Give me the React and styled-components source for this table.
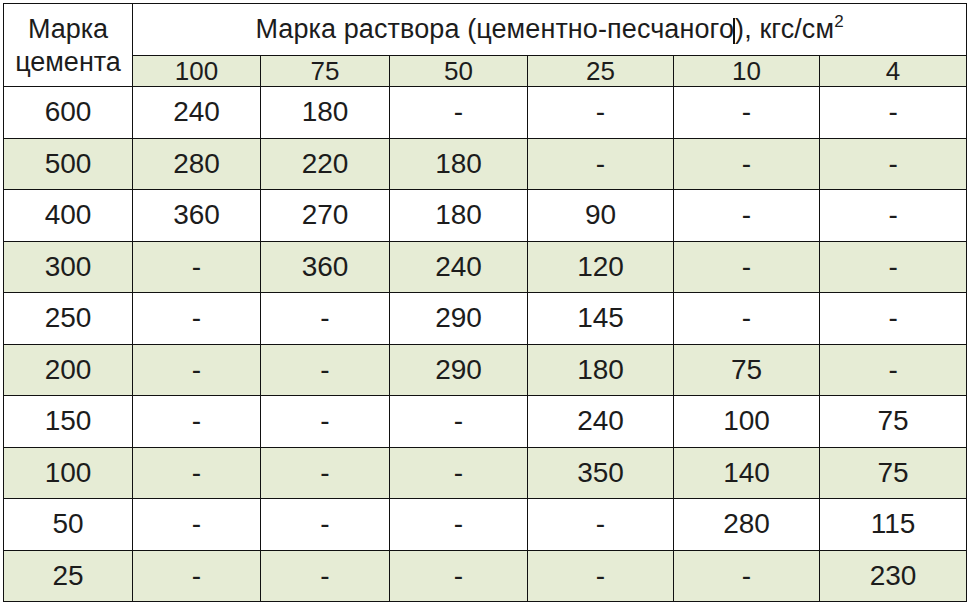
import React from 'react'
import styled, { createGlobalStyle } from 'styled-components'

const GlobalStyle = createGlobalStyle`
  html, body {
    margin: 0;
    padding: 0;
    background: #fff;
  }
  body {
    font-family: "Liberation Sans", Arial, sans-serif;
    color: #1c1c1c;
  }
`

const Page = styled.div`
  padding: 3px 0 0 3px;
`

const Table = styled.table`
  border-collapse: collapse;
  table-layout: fixed;
  width: 963px;
`

const Cell = styled.td`
  border: 1px solid #111;
  padding: 0;
  text-align: center;
  vertical-align: middle;
  font-size: 28px;
  font-weight: normal;
  line-height: 1;
  background: ${props => (props.shaded ? '#e6ecd5' : '#fff')};
`

const CornerCell = styled(Cell)`
  font-size: 27px;
  line-height: 33px;
  background: #fff;
  padding-top: 2px;
`

const TitleCell = styled(Cell)`
  font-size: 27px;
  letter-spacing: 0.1px;
  height: 51px;
  background: #fff;
  white-space: nowrap;
`

const SubCell = styled(Cell)`
  font-size: 26px;
  height: 30px;
  background: #e6ecd5;
`

const BodyRow = styled.tr`
  height: 51.5px;
`

const Cursor = styled.span`
  display: inline-block;
  width: 2px;
  height: 26px;
  margin: 0 0 0 -1px;
  background: #111;
  vertical-align: -6px;
`

const Sup = styled.sup`
  font-size: 17px;
  vertical-align: 11px;
  line-height: 0;
`

const widths = [129, 128, 129, 138, 146, 146, 147]
const marks = ['100', '75', '50', '25', '10', '4']

const rows = [
  ['600', '240', '180', '-', '-', '-', '-'],
  ['500', '280', '220', '180', '-', '-', '-'],
  ['400', '360', '270', '180', '90', '-', '-'],
  ['300', '-', '360', '240', '120', '-', '-'],
  ['250', '-', '-', '290', '145', '-', '-'],
  ['200', '-', '-', '290', '180', '75', '-'],
  ['150', '-', '-', '-', '240', '100', '75'],
  ['100', '-', '-', '-', '350', '140', '75'],
  ['50', '-', '-', '-', '-', '280', '115'],
  ['25', '-', '-', '-', '-', '-', '230'],
]

export default function App() {
  return (
    <Page>
      <GlobalStyle />
      <Table>
        <colgroup>
          {widths.map((w, i) => (
            <col key={i} style={{ width: w }} />
          ))}
        </colgroup>
        <thead>
          <tr>
            <CornerCell as="th" rowSpan={2}>
              Марка
              <br />
              цемента
            </CornerCell>
            <TitleCell as="th" colSpan={6}>
              Марка раствора (цементно-песчаного<Cursor />), кгс/см<Sup>2</Sup>
            </TitleCell>
          </tr>
          <tr>
            {marks.map(m => (
              <SubCell key={m}>{m}</SubCell>
            ))}
          </tr>
        </thead>
        <tbody>
          {rows.map((row, i) => (
            <BodyRow key={row[0]}>
              {row.map((v, j) => (
                <Cell key={j} shaded={i % 2 === 1}>
                  {v}
                </Cell>
              ))}
            </BodyRow>
          ))}
        </tbody>
      </Table>
    </Page>
  )
}
